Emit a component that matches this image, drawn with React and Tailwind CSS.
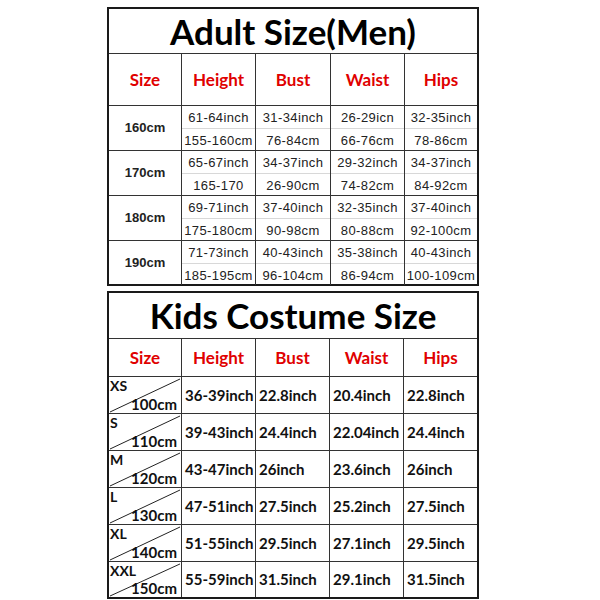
import React from "react";

const adultRows = [
  ["160cm", ["61-64inch", "155-160cm"], ["31-34inch", "76-84cm"], ["26-29icn", "66-76cm"], ["32-35inch", "78-86cm"]],
  ["170cm", ["65-67inch", "165-170"], ["34-37inch", "26-90cm"], ["29-32inch", "74-82cm"], ["34-37inch", "84-92cm"]],
  ["180cm", ["69-71inch", "175-180cm"], ["37-40inch", "90-98cm"], ["32-35inch", "80-88cm"], ["37-40inch", "92-100cm"]],
  ["190cm", ["71-73inch", "185-195cm"], ["40-43inch", "96-104cm"], ["35-38inch", "86-94cm"], ["40-43inch", "100-109cm"]],
];

const kidsRows = [
  ["XS", "100cm", "36-39inch", "22.8inch", "20.4inch", "22.8inch"],
  ["S", "110cm", "39-43inch", "24.4inch", "22.04inch", "24.4inch"],
  ["M", "120cm", "43-47inch", "26inch", "23.6inch", "26inch"],
  ["L", "130cm", "47-51inch", "27.5inch", "25.2inch", "27.5inch"],
  ["XL", "140cm", "51-55inch", "29.5inch", "27.1inch", "29.5inch"],
  ["XXL", "150cm", "55-59inch", "31.5inch", "29.1inch", "31.5inch"],
];

const headers = ["Size", "Height", "Bust", "Waist", "Hips"];
const cols = "grid grid-cols-[73px_74px_75px_74px_1fr]";
const kcols = "grid grid-cols-[73px_74px_74px_74px_1fr]";

export default function App() {
  return (
    <div className="w-[600px] h-[600px] bg-white pt-[7px] pl-[107px] font-['Lato',sans-serif]">
      <div className="w-[372px] border-2 border-[#1a1a1a]">
        <div className="h-[45px] border-b border-[#333] flex items-center justify-center text-[35px] font-bold text-black leading-none">
          Adult Size(Men)
        </div>
        <div className={`${cols} h-[52px] border-b border-[#333]`}>
          {headers.map((t, i) => (
            <div
              key={t}
              className={`flex items-center justify-center text-[17px] font-bold text-[#e00000] ${i < 4 ? "border-r border-[#333]" : ""}`}
            >
              {t}
            </div>
          ))}
        </div>
        {adultRows.map((r, ri) => (
          <div key={ri} className={`${cols} ${ri < 3 ? "h-[45px] border-b border-[#333]" : "h-[43px]"}`}>
            <div className="border-r border-[#333] flex items-center justify-center font-['Liberation_Sans',sans-serif] font-bold text-[13px] text-[#222]">
              {r[0]}
            </div>
            {r.slice(1).map((c, ci) => (
              <div key={ci} className={`flex flex-col ${ci < 3 ? "border-r border-[#333]" : ""}`}>
                {c.map((s, si) => (
                  <div
                    key={si}
                    className={`flex-1 flex items-center justify-center pt-[2px] font-['Liberation_Sans',sans-serif] text-[13px] tracking-[0.4px] text-[#222] ${si === 0 ? "border-b border-[#d8d8d8]" : ""}`}
                  >
                    {s}
                  </div>
                ))}
              </div>
            ))}
          </div>
        ))}
      </div>

      <div className="w-[372px] mt-[5px] border-2 border-[#1a1a1a]">
        <div className="h-[46px] border-b border-[#333] flex items-center justify-center text-[35px] font-bold text-black leading-none">
          Kids Costume Size
        </div>
        <div className={`${kcols} h-[38px] border-b border-[#333]`}>
          {headers.map((t, i) => (
            <div
              key={t}
              className={`flex items-center justify-center text-[17px] font-bold text-[#e00000] ${i < 4 ? "border-r border-[#333]" : ""}`}
            >
              {t}
            </div>
          ))}
        </div>
        {kidsRows.map((r, ri) => (
          <div key={ri} className={`${kcols} ${ri < 5 ? "h-[37px] border-b border-[#333]" : "h-[35px]"}`}>
            <div className="relative border-r border-[#333] flex flex-col justify-between pl-[1px] pr-[4px] text-[#111] font-bold leading-none">
              <svg className="absolute inset-0 w-full h-full" viewBox="0 0 72 36" preserveAspectRatio="none">
                <line x1="1" y1="35" x2="71" y2="2" stroke="#222" strokeWidth="1" />
              </svg>
              <span className="relative text-[14px] pt-[2px]">{r[0]}</span>
              <span className="relative text-[15px] self-end pb-[1px]">{r[1]}</span>
            </div>
            {r.slice(2).map((c, ci) => (
              <div
                key={ci}
                className={`flex items-center pl-[3px] text-[15px] font-bold text-[#111] whitespace-nowrap ${ci < 3 ? "border-r border-[#333]" : ""}`}
              >
                {c}
              </div>
            ))}
          </div>
        ))}
      </div>
    </div>
  );
}
